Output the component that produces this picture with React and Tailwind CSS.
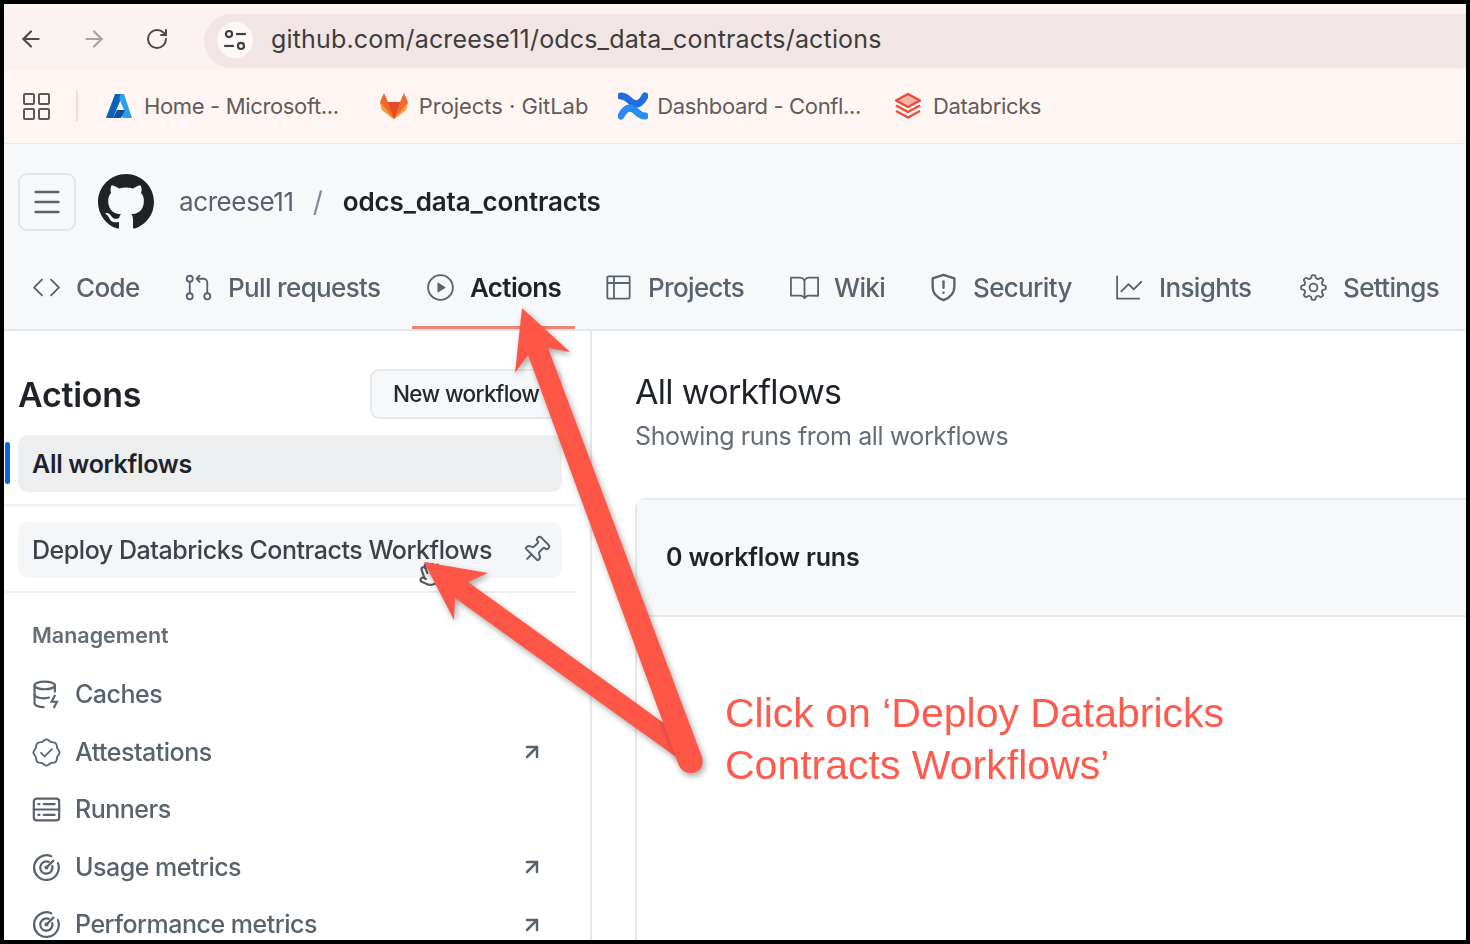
import { ArrowLeft, ArrowRight, ArrowUpRight, RotateCw, Hand, Menu, Pin } from "lucide-react";
import {
  GoBook,
  GoCode,
  GoGear,
  GoGitPullRequest,
  GoGraph,
  GoPlay,
  GoTable,
  GoVerified,
} from "react-icons/go";

function GithubMark({ className }) {
  return (
    <svg viewBox="0 0 16 16" fill="currentColor" className={className}>
      <path d="M8 0c4.42 0 8 3.58 8 8a8.013 8.013 0 0 1-5.45 7.59c-.4.08-.55-.17-.55-.38 0-.27.01-1.13.01-2.2 0-.75-.25-1.23-.54-1.48 1.78-.2 3.65-.88 3.65-3.95 0-.88-.31-1.59-.82-2.15.08-.2.36-1.02-.08-2.12 0 0-.67-.22-2.2.82-.64-.18-1.32-.27-2-.27-.68 0-1.36.09-2 .27-1.53-1.03-2.2-.82-2.2-.82-.44 1.1-.16 1.92-.08 2.12-.51.56-.82 1.28-.82 2.15 0 3.06 1.86 3.75 3.64 3.95-.23.2-.44.55-.51 1.07-.46.21-1.61.55-2.33-.66-.15-.24-.6-.83-1.23-.82-.67.01-.27.38.01.53.34.19.73.9.82 1.13.16.45.68 1.31 2.69.94 0 .67.01 1.3.01 1.49 0 .21-.15.45-.55.38A7.995 7.995 0 0 1 0 8c0-4.42 3.58-8 8-8Z" />
    </svg>
  );
}

function ShieldAlert({ className }) {
  return (
    <svg viewBox="0 0 16 16" fill="none" stroke="currentColor" strokeWidth="1.3" strokeLinejoin="round" strokeLinecap="round" className={className}>
      <path d="M8 1 14 3v4.5c0 3.4-2.4 6.2-6 7.5-3.6-1.3-6-4.1-6-7.5V3Z" />
      <path d="M8 4.6v3.6" />
      <path d="M8 10.8v.1" />
    </svg>
  );
}

function CacheIcon({ className }) {
  return (
    <svg viewBox="0 0 16 16" fill="none" stroke="currentColor" strokeWidth="1.2" strokeLinecap="round" className={className}>
      <ellipse cx="7" cy="3" rx="5.6" ry="2.1" />
      <path d="M1.4 3v9.8c0 1.2 2.4 2.2 5 2.2" />
      <path d="M1.4 8c0 1.2 2.4 2.1 5.2 2.1 1 0 2-.1 2.8-.4" />
      <path d="M12.6 3v3.5" />
      <path d="M12.6 8.6 10.8 12h3l-1.6 3" />
    </svg>
  );
}

function RunnersIcon({ className }) {
  return (
    <svg viewBox="0 0 16 16" fill="none" stroke="currentColor" strokeWidth="1.2" strokeLinecap="round" className={className}>
      <rect x="1" y="2" width="14" height="12" rx="1.6" />
      <path d="M1 8h14" />
      <path d="M3.5 5h.6M6.5 5h6M3.5 11h.6M6.5 11h6" />
    </svg>
  );
}

function MeterIcon({ className }) {
  return (
    <svg viewBox="0 0 16 16" fill="none" stroke="currentColor" strokeWidth="1.25" strokeLinecap="round" className={className}>
      <path d="M10.6 1.8A6.8 6.8 0 1 0 14.3 5.6" />
      <path d="M9.2 4.9A3.4 3.4 0 1 0 11.2 7.2" />
      <circle cx="8" cy="8" r="1.1" fill="currentColor" stroke="none" />
      <path d="M8 8 11.8 4.2" />
    </svg>
  );
}

function TuneIcon() {
  return (
    <svg viewBox="0 0 24 24" fill="none" stroke="#3f3f3f" strokeWidth="2" className="w-[26px] h-[26px]">
      <circle cx="6.5" cy="6.5" r="2.8" />
      <path d="M13 6.5h9" />
      <path d="M2 17.5h9" />
      <circle cx="17.5" cy="17.5" r="2.8" />
    </svg>
  );
}

function AzureLogo() {
  return (
    <svg viewBox="0 0 28 28" className="w-[28px] h-[28px]">
      <path d="M10 2h8L8 26H1Z" fill="#0a63b8" />
      <path d="M16 2h3l8 24h-9l-4-7 5-1-5-12Z" fill="#2aa0e8" />
      <path d="M12 18h8l-4 8H8Z" fill="#0d4f9c" />
    </svg>
  );
}

function GitLabLogo() {
  return (
    <svg viewBox="0 0 30 28" className="w-[30px] h-[28px]">
      <path d="M15 27 3 18 1 10 5 1l4 9h12l4-9 4 9-2 8Z" fill="#f0692c" />
      <path d="M15 27 9 10h12Z" fill="#e34a26" />
      <path d="M15 27 1 10l2 8ZM15 27l14-17-2 8Z" fill="#f9a03a" />
    </svg>
  );
}

function ConfluenceLogo() {
  return (
    <svg viewBox="0 0 30 30" className="w-[30px] h-[30px]" fill="none" strokeLinecap="round">
      <path d="M3 5c6 0 8 5 12 7s8 1 12-7" stroke="#1d6fe0" strokeWidth="7" />
      <path d="M3 25c4-8 8-9 12-7s6 7 12 7" stroke="#2a8cf2" strokeWidth="7" />
    </svg>
  );
}

function DatabricksLogo() {
  return (
    <svg viewBox="0 0 28 28" className="w-[28px] h-[28px]" fill="none" stroke="#ee4a38" strokeWidth="2.4" strokeLinejoin="round">
      <path d="M14 2 26 8.5 14 15 2 8.5Z" fill="#f9b3a8" />
      <path d="M2 13.5 14 20l12-6.5" />
      <path d="M2 19 14 25.5 26 19" />
    </svg>
  );
}

const bookmarks = [
  { label: "Home - Microsoft...", logo: <AzureLogo />, className: "ml-[27px] gap-[11px] tracking-[-0.35px]" },
  { label: "Projects · GitLab", logo: <GitLabLogo />, className: "ml-[40px] gap-[10px] tracking-[-0.05px]" },
  { label: "Dashboard - Confl...", logo: <ConfluenceLogo />, className: "ml-[30px] gap-[9px] tracking-[-0.35px]" },
  { label: "Databricks", logo: <DatabricksLogo />, className: "ml-[33px] gap-[11px] tracking-[-0.35px]" },
];

const tabs = [
  { label: "Code", icon: GoCode, className: "w-[152px]" },
  { label: "Pull requests", icon: GoGitPullRequest, className: "w-[242px]" },
  { label: "Actions", icon: GoPlay, className: "w-[178px]", active: true },
  { label: "Projects", icon: GoTable, className: "w-[186px]" },
  { label: "Wiki", icon: GoBook, className: "w-[139px]" },
  { label: "Security", icon: ShieldAlert, className: "w-[186px]" },
  { label: "Insights", icon: GoGraph, className: "w-[184px]" },
  { label: "Settings", icon: GoGear, className: "w-[170px]" },
];

const managementLinks = [
  { label: "Caches", icon: CacheIcon },
  { label: "Attestations", icon: GoVerified, external: true },
  { label: "Runners", icon: RunnersIcon },
  { label: "Usage metrics", icon: MeterIcon, external: true },
  { label: "Performance metrics", icon: MeterIcon, external: true },
];

function Annotation() {
  return (
    <>
      <Hand className="absolute left-[417px] top-[561px] w-[26px] h-[26px] text-[#55595e] rotate-[-20deg]" strokeWidth={2} />
      <svg viewBox="0 0 1470 944" className="absolute inset-0 w-[1470px] h-[944px]">
        <path d="M424 562 488 573 468 582 690 742 690 767 455 598 454 620Z" fill="#fe5748" className="drop-shadow-[2px_3px_3px_rgba(0,0,0,0.35)]" />
        <path d="M522 308 570 352 548 348 702 757 C705 768 697 774 690 773 C684 773 680 769 678 763 L528 355 515 373Z" fill="#fe5748" className="drop-shadow-[2px_3px_3px_rgba(0,0,0,0.35)]" />
      </svg>
      <p className="absolute left-[725px] top-[687px] whitespace-nowrap text-[41px] leading-[52px] text-[#fe5a4d] font-['Liberation_Sans',sans-serif]">
        Click on ‘Deploy Databricks
        <br />
        Contracts Workflows’
      </p>
    </>
  );
}

export default function App() {
  return (
    <div className="relative w-[1470px] h-[944px] overflow-hidden border-[4px] border-black bg-white font-['Inter',sans-serif] box-border">
      <div className="flex flex-col h-full blur-[0.6px]">
        <div className="flex items-center h-[66px] shrink-0 pl-[14px] pt-[4px] bg-[#fbf3f1] text-[#4a4a4a]">
          <ArrowLeft className="w-[26px] h-[26px]" strokeWidth={2} />
          <ArrowRight className="ml-[37px] w-[26px] h-[26px] text-[#a5a2a1]" strokeWidth={2} />
          <RotateCw className="ml-[38px] w-[24px] h-[24px]" strokeWidth={2} />
          <div className="ml-[35px] mt-[4px] flex items-center flex-1 h-[54px] pl-[13px] pb-[3px] rounded-l-full bg-[#f1e6e5]">
            <div className="flex items-center justify-center w-[36px] h-[36px] rounded-full bg-[#fdf8f7]">
              <TuneIcon />
            </div>
            <span className="ml-[18px] text-[25px] tracking-[0.17px] text-[#3d3d3d]">github.com/acreese11/odcs_data_contracts/actions</span>
          </div>
        </div>

        <div className="flex items-center h-[74px] shrink-0 pl-[19px] pb-[1px] bg-[#fff6f3] border-b border-[#eee8e6] text-[#5f5c5b]">
          <div className="grid grid-cols-2 gap-[3px]">
            <div className="w-[12px] h-[12px] rounded-[2px] border-2 border-[#5a5a5a]" />
            <div className="w-[12px] h-[12px] rounded-[2px] border-2 border-[#5a5a5a]" />
            <div className="w-[12px] h-[12px] rounded-[2px] border-2 border-[#5a5a5a]" />
            <div className="w-[12px] h-[12px] rounded-[2px] border-2 border-[#5a5a5a]" />
          </div>
          <div className="ml-[26px] w-[2px] h-[30px] bg-[#f3dcd8]" />
          {bookmarks.map((b) => (
            <div key={b.label} className={`flex items-center ${b.className}`}>
              {b.logo}
              <span className="text-[22px]">{b.label}</span>
            </div>
          ))}
        </div>

        <div className="shrink-0 bg-[#f6f8fa] border-b-2 border-[#e4e7ea]">
          <div className="flex items-center h-[115px] pl-[14px]">
            <div className="flex items-center justify-center w-[58px] h-[58px] rounded-[9px] border-2 border-[#e3e6e9] text-[#59636e]">
              <Menu className="w-[34px] h-[34px]" strokeWidth={1.8} />
            </div>
            <GithubMark className="ml-[22px] w-[56px] h-[56px] text-[#1f2328]" />
            <span className="ml-[25px] text-[26px] tracking-[-0.4px] text-[#59636e]">acreese11</span>
            <span className="ml-[19px] text-[28px] text-[#818b98]">/</span>
            <span className="ml-[20px] text-[26px] tracking-[-0.15px] font-semibold text-[#1f2328]">odcs_data_contracts</span>
          </div>
          <nav className="flex h-[70px] pl-[14px]">
            {tabs.map((t) => (
              <div key={t.label} className={`relative flex items-center gap-[15px] pl-[14px] pb-[14px] ${t.className} ${t.active ? "text-[#1f2328] font-semibold" : "text-[#59636e] font-medium"}`}>
                <t.icon className="w-[29px] h-[29px] text-[#59636e] shrink-0" />
                <span className="text-[26px] tracking-[-0.65px]">{t.label}</span>
                {t.active && <div className="absolute left-0 w-[163px] bottom-0 h-[3px] bg-[#ec8478]" />}
              </div>
            ))}
          </nav>
        </div>

        <div className="flex flex-1 min-h-0">
          <aside className="w-[588px] shrink-0 border-r-2 border-[#e6e9ec] pr-[14px]">
            <div className="flex items-center justify-between h-[104px] pl-[14px] pr-[14px] pt-[22px]">
              <h2 className="text-[34px] tracking-[-0.3px] font-semibold text-[#1f2328]">Actions</h2>
              <div className="flex items-center w-[192px] h-[50px] pl-[21px] rounded-[9px] border-2 border-[#e6e9ec] bg-[#f6f8fa] text-[22.5px] tracking-[-0.65px] font-medium text-[#25292e]">
                New workflow
              </div>
            </div>
            <div className="relative mx-[14px] flex items-center h-[57px] pl-[14px] pt-[2px] rounded-[10px] bg-[#eceef0] text-[25px] tracking-[-0.3px] font-semibold text-[#1f2328]">
              All workflows
              <div className="absolute left-[-13px] top-[7px] w-[5px] h-[42px] rounded-[3px] bg-[#0969da]" />
            </div>
            <div className="mt-[12px] h-[2px] bg-[#eceef0]" />
            <div className="mt-[16px] mx-[14px] flex items-center justify-between h-[56px] pl-[14px] pr-[11px] rounded-[10px] bg-[#f5f6f7] text-[25px] font-medium tracking-[-0.45px] text-[#3b4249]">
              <span className="pt-[2px]">Deploy Databricks Contracts Workflows</span>
              <Pin className="w-[30px] h-[30px] rotate-45 text-[#59636e]" strokeWidth={1.6} />
            </div>
            <div className="mt-[13px] h-[2px] bg-[#eceef0]" />
            <div className="mt-[29px] pl-[28px] text-[21.5px] font-semibold leading-[26px] text-[#656d76]">Management</div>
            <div className="mt-[18px] flex flex-col">
              {managementLinks.map((m) => (
                <div key={m.label} className="flex items-center h-[57.5px] pl-[28px] pr-[32px] text-[25px] font-medium tracking-[-0.5px] text-[#59636e]">
                  <m.icon className="w-[29px] h-[29px] shrink-0" />
                  <span className="ml-[14px] flex-1">{m.label}</span>
                  {m.external && <ArrowUpRight className="w-[24px] h-[24px]" strokeWidth={2.5} />}
                </div>
              ))}
            </div>
          </aside>

          <main className="flex-1 min-w-0 pl-[43px]">
            <h1 className="mt-[39px] text-[34px] leading-[44px] tracking-[-0.7px] text-[#1f2328]">All workflows</h1>
            <p className="mt-[5px] text-[25px] leading-[34px] tracking-[-0.4px] text-[#656d76]">Showing runs from all workflows</p>
            <div className="mt-[45px] h-[600px] rounded-tl-[10px] border-l-2 border-t-2 border-[#e6e9ec]">
              <div className="flex items-center h-[117px] pl-[29px] bg-[#f6f8fa] border-b-2 border-[#e6e9ec] text-[25px] tracking-[-0.15px] font-semibold text-[#1f2328]">
                0 workflow runs
              </div>
            </div>
          </main>
        </div>
      </div>
      <div className="absolute left-[-4px] top-[-4px]">
        <Annotation />
      </div>
    </div>
  );
}
